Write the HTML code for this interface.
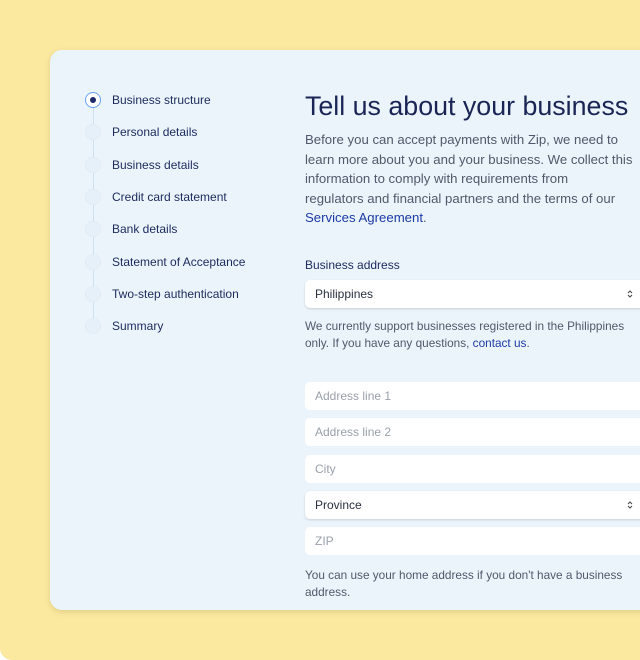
<!DOCTYPE html>
<html><head><style>
html,body{margin:0;padding:0;width:640px;height:660px;overflow:hidden;background:#fff;font-family:"Liberation Sans",sans-serif;}
.bg{position:absolute;left:0;top:0;width:640px;height:660px;background:#fbe9a0;border-radius:0 0 0 12px;}
.card{position:absolute;left:50px;top:50px;width:620px;height:560px;background:#ebf4fb;border-radius:12px;box-shadow:0 2px 6px rgba(150,130,60,.25);overflow:hidden;}
.step{position:absolute;left:62px;font-size:12px;color:#1c2a5c;white-space:nowrap;}
.dot{position:absolute;left:36px;width:14px;height:14px;border-radius:50%;background:#e6f0f9;box-shadow:0 0 0 1px #e0ebf5;}
.line{position:absolute;left:43px;top:57px;width:1px;height:220px;background:#cfe0ee;}
.h1{position:absolute;left:255px;top:41px;font-size:26.8px;color:#1a2555;white-space:nowrap;}
.p{position:absolute;left:255px;font-size:13.2px;color:#50596b;line-height:19.5px;white-space:nowrap;}
a{color:#1d3aa6;text-decoration:none;}
.lab{position:absolute;left:255px;top:208px;font-size:12px;color:#1c2a5c;}
.inp{position:absolute;left:255px;width:380px;height:28px;background:#fff;border-radius:5px;font-size:12px;line-height:28px;padding-left:10px;box-sizing:border-box;}
.sel{box-shadow:0 1px 2px rgba(0,0,0,.15);color:#2a3040;}
.ph{color:#9aa0aa;}
.arr{position:absolute;left:322px;top:9px;width:6px;height:10px;}
</style></head><body>
<div class="bg"></div>
<div class="card">
<div class="line"></div>
<div class="dot" style="top:43px;background:#fff;box-shadow:0 0 0 1px #6aa0f0;"><div style="position:absolute;left:4px;top:4px;width:6px;height:6px;border-radius:50%;background:#1c2a6c"></div></div>
<div class="dot" style="top:75px"></div>
<div class="dot" style="top:108px"></div>
<div class="dot" style="top:140px"></div>
<div class="dot" style="top:172px"></div>
<div class="dot" style="top:205px"></div>
<div class="dot" style="top:237px"></div>
<div class="dot" style="top:269px"></div>
<div class="step" style="top:43px">Business structure</div>
<div class="step" style="top:75px">Personal details</div>
<div class="step" style="top:108px">Business details</div>
<div class="step" style="top:140px">Credit card statement</div>
<div class="step" style="top:172px">Bank details</div>
<div class="step" style="top:205px">Statement of Acceptance</div>
<div class="step" style="top:237px">Two-step authentication</div>
<div class="step" style="top:269px">Summary</div>
<div class="h1">Tell us about your business</div>
<div class="p" style="top:80px">Before you can accept payments with Zip, we need to<br>learn more about you and your business. We collect this<br>information to comply with requirements from<br>regulators and financial partners and the terms of our<br><a>Services Agreement</a>.</div>
<div class="lab">Business address</div>
<div class="inp sel" style="top:230px">Philippines<svg class="arr" viewBox="0 0 6 10"><path d="M1 4 L3 2 L5 4 M1 6 L3 8 L5 6" fill="none" stroke="#444" stroke-width="1"/></svg></div>
<div class="p" style="top:268px;font-size:11.8px;line-height:17px;">We currently support businesses registered in the Philippines<br>only. If you have any questions, <a>contact us</a>.</div>
<div class="inp ph" style="top:332px">Address line 1</div>
<div class="inp ph" style="top:368px">Address line 2</div>
<div class="inp ph" style="top:405px">City</div>
<div class="inp sel" style="top:441px">Province<svg class="arr" viewBox="0 0 6 10"><path d="M1 4 L3 2 L5 4 M1 6 L3 8 L5 6" fill="none" stroke="#444" stroke-width="1"/></svg></div>
<div class="inp ph" style="top:477px">ZIP</div>
<div class="p" style="top:517px;font-size:11.8px;line-height:17px;">You can use your home address if you don't have a business<br>address.</div>
</div>
</body></html>
